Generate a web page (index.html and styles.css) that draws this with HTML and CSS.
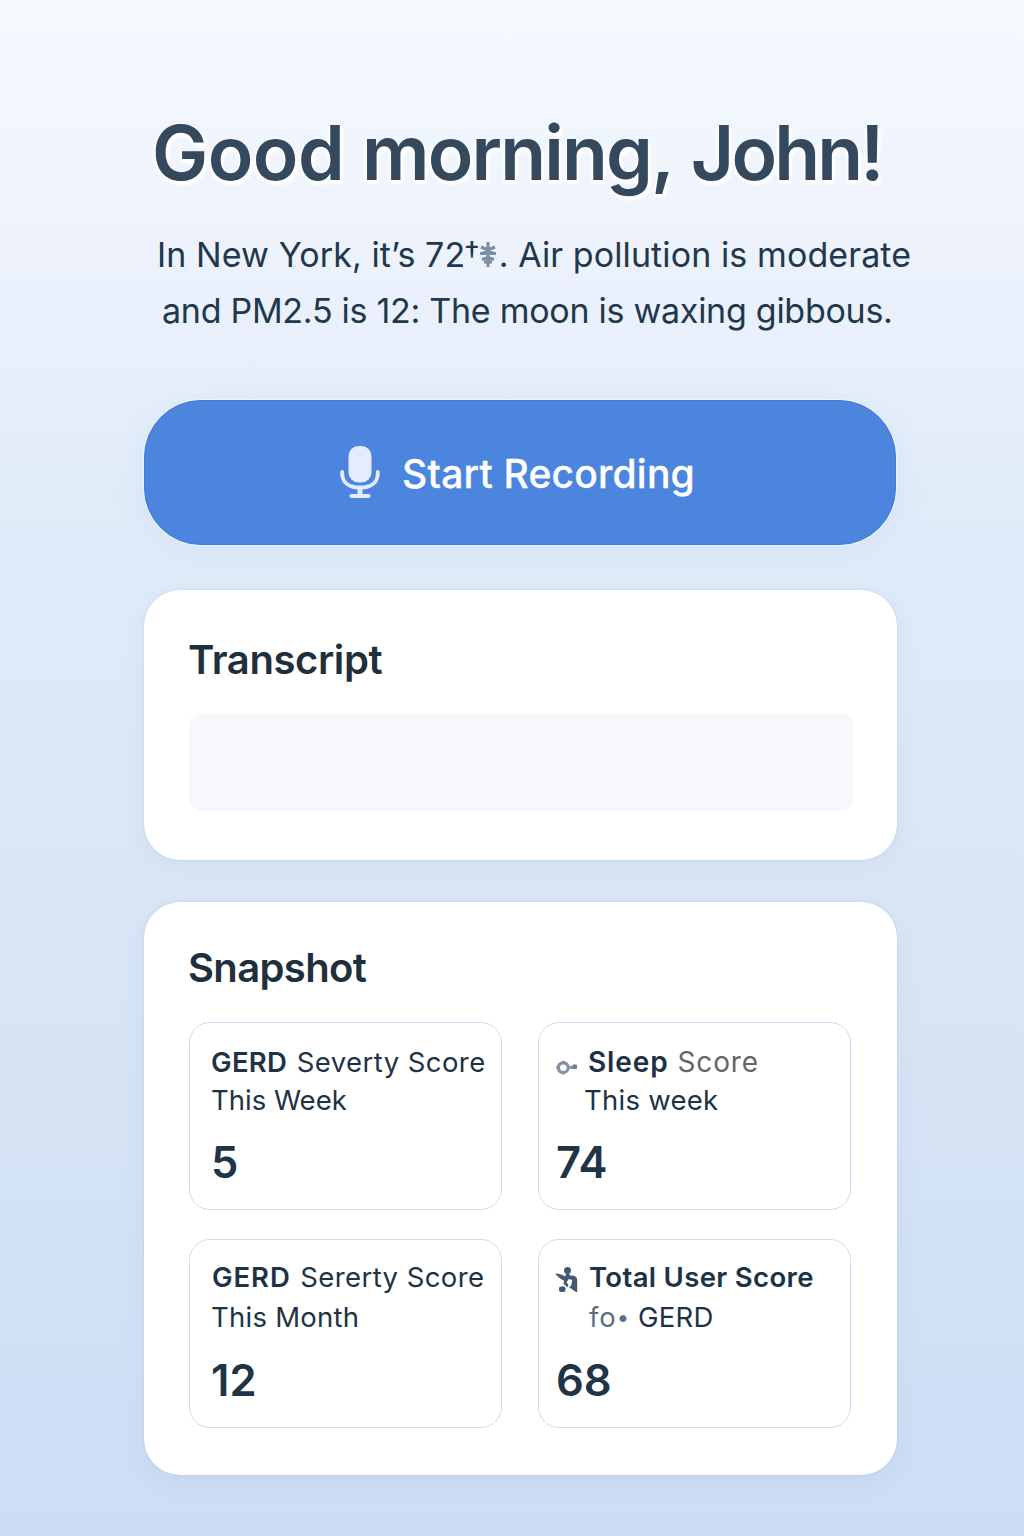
FILE: index.html
```html
<!DOCTYPE html>
<html lang="en">
<head>
<meta charset="utf-8">
<title>Good morning</title>
<link rel="stylesheet" href="styles.css">
</head>
<body>
<main class="page">
  <header class="intro">
    <h1 class="greeting"><span class="greet-good">Good</span> <span class="greet-morning">morning,</span> <span class="greet-name">John!</span></h1>
    <p class="weather"><span class="line line-one">In New York, it’s 72<span class="dagger">†</span><svg class="weather-mark" viewBox="0 0 16 26" aria-hidden="true"><path d="M8 0v25M1 5l7 3 7-3M0 11.500h16M2 12l6-4 6 4M2 17.500l6-2 6 2M4 20h8" fill="none" stroke="currentColor" stroke-width="3"/></svg>. Air pollution is moderate</span><span class="line line-two">and PM2.5 is 12: The moon is waxing gibbous.</span></p>
  </header>

  <button class="record" type="button">
    <svg class="mic" viewBox="0 0 40 54" aria-hidden="true">
      <rect x="8.500" y="1" width="23" height="36.500" rx="10" fill="#e4edfd"/>
      <path d="M2.200 27v1.500c0 8.500 6 14 17.800 14s17.800-5.500 17.800-14V27" fill="none" stroke="#e4edfd" stroke-width="3.800" stroke-linecap="round"/>
      <path d="M20 43v7" stroke="#e4edfd" stroke-width="5"/>
      <path d="M11.500 51h17" stroke="#e4edfd" stroke-width="4.200" stroke-linecap="round"/>
    </svg>
    <span class="record-label">Start Recording</span>
  </button>

  <section class="card transcript">
    <h2 class="card-title">Transcript</h2>
    <div class="transcript-box"></div>
  </section>

  <section class="card snapshot">
    <h2 class="card-title snapshot-title">Snapshot</h2>
    <div class="tiles">
      <article class="tile">
        <p class="label"><strong class="gerd">GERD</strong> <span class="metric">Severty Score</span></p>
        <p class="period">This Week</p>
        <p class="value">5</p>
      </article>
      <article class="tile tile-icon">
        <div class="label"><svg class="icon" viewBox="0 0 24 28" aria-hidden="true"><path d="M8.500 9.500 13 12 15.500 16.500 13 21 8.500 23.800 3.500 21.500 1 16.500 3.500 12z" fill="#8291a4"/><path d="M14 16.500h5" stroke="#8c9aab" stroke-width="3"/><rect x="17.500" y="13.500" width="4.500" height="4.500" rx="1" fill="#6b7c90"/><circle cx="8.300" cy="16.700" r="3.300" fill="#fff"/></svg><p class="sleep"><strong>Sleep</strong> <span class="muted">Score</span></p></div>
        <p class="period period-sleep">This week</p>
        <p class="value">74</p>
      </article>
      <article class="tile tile-low">
        <p class="label label-month"><strong class="gerd-month">GERD</strong> <span class="metric">Sererty Score</span></p>
        <p class="period">This Month</p>
        <p class="value">12</p>
      </article>
      <article class="tile tile-icon tile-low">
        <div class="label"><svg class="icon" viewBox="0 0 24 28" aria-hidden="true"><g fill="#435a70"><circle cx="12.500" cy="4.500" r="3.500"/><path d="M.2 7.500C5 7.500 8 9 10 10.500L11.500 7.500h2.500L15 9.500c4-.5 7 1 7.200 4V26.500L19.500 25l-5.500-4 2.200-1.500 1-5.500-3.400-1-2.300 3.500 2 2-1.200 3-3.800-4 .5-3C5 13 2.500 10.500.2 7.500z"/><rect x="4" y="20.500" width="6.500" height="5.500" rx="2"/></g></svg><p class="total"><strong>Total User Score</strong></p></div>
        <p class="period period-total"><span class="faded">fo<span class="dot">•</span></span> GERD</p>
        <p class="value">68</p>
      </article>
    </div>
  </section>
</main>
</body>
</html>
```

FILE: styles.css
```css
* { box-sizing: border-box; }

body {
  margin: 0;
  min-height: 1536px;
  font-family: Inter, "Liberation Sans", sans-serif;
  color: #1d3345;
  background: linear-gradient(180deg, #f6f9fe 0, #eef3fd 220px, #e8effb 370px, #e1ecf9 480px, #dbe8f7 760px, #d5e3f5 1130px, #cfdef5 1450px, #cdddf5 1536px);
}

h1, h2, p { margin: 0; }

.page {
  display: flex;
  flex-direction: column;
  width: 753px;
  margin-left: 144px;
  padding-top: 108px;
}

.intro { height: 292px; white-space: nowrap; }

.greeting {
  margin-left: 8px;
  font-size: 75px;
  line-height: 90px;
  font-weight: 600;
  letter-spacing: -1.2px;
  color: #34495d;
  text-shadow: 0 2px 3px #fff, 0 3px 3px #fff, 3px 4px 3px #fff, -2px 2px 3px #fff;
}
.greet-good { letter-spacing: -.5px; }
.greet-morning { letter-spacing: -1.850px; }
.greet-name { letter-spacing: -2.900px; }

.weather {
  margin-top: 29px;
  font-size: 34px;
  line-height: 56px;
  color: #1f384b;
}

.line { display: block; }
.line-one { margin-left: 13px; letter-spacing: .1px; }
.line-two { margin-left: 18px; letter-spacing: -.27px; }
.dagger { margin-left: -1px; font-size: 31px; vertical-align: 3px; line-height: 0; }
.weather-mark { width: 16px; height: 26px; margin: 0 3px 0 0; vertical-align: -1px; color: #7a8da3; }

.record {
  display: flex;
  align-items: center;
  justify-content: center;
  gap: 22px;
  width: 752px;
  height: 145px;
  padding: 0 5px 0 0;
  border: 1px solid #3d7bdc;
  border-radius: 57px;
  color: #fff;
  background: #4c85dd;
  font: 500 39px/48px Inter, "Liberation Sans", sans-serif;
  letter-spacing: .2px;
  -webkit-text-stroke: .3px #fff;
  box-shadow: 0 0 0 1px rgba(255, 255, 255, .5), 0 4px 32px rgba(100, 150, 215, .10);
}

.mic { width: 40px; height: 54px; margin-bottom: 2px; }
.record-label { padding-top: 2px; }

.card {
  background: #fff;
  border-radius: 36px;
  box-shadow: 0 0 2px rgba(135, 172, 225, .45), 0 6px 22px rgba(110, 145, 195, .10);
}

.transcript { height: 270px; margin-top: 45px; padding: 45px; }
.snapshot { height: 573px; margin-top: 42px; padding: 41px 45px 0; }

.card-title {
  height: 50px;
  margin-left: -1px;
  font-size: 40px;
  line-height: 50px;
  font-weight: 600;
  letter-spacing: -.4px;
  color: #1f303d;
}
.snapshot-title { letter-spacing: -.65px; }

.transcript-box {
  width: 664px;
  height: 98px;
  margin-top: 28px;
  border-radius: 12px;
  background: #f6f8fc;
}

.tiles {
  display: grid;
  grid-template-columns: 313px 313px;
  grid-template-rows: 188px 189px;
  gap: 29px 36px;
  margin-top: 29px;
}

.tile {
  padding: 20px 0 0 21px;
  border: 1px solid #ccdcf9;
  border-radius: 21px;
  white-space: nowrap;
}
.tile-icon { padding-left: 17px; }
.tile-low { padding-top: 18px; }

.label { display: flex; gap: 10px; height: 39px; font-size: 27.500px; line-height: 39px; }
.label strong { font-weight: 600; }
.gerd { letter-spacing: .3px; }
.gerd-month { letter-spacing: .9px; }
.label-month { padding-left: 1px; }
.metric { margin-left: -.5px; letter-spacing: .42px; }
.icon { width: 24px; height: 28px; margin: 8px 0 0 -1px; overflow: visible; }
.sleep { margin-left: -1px; font-size: 28px; letter-spacing: .9px; }
.total { letter-spacing: .35px; }
.muted { color: #666; }
.period { height: 38px; margin-top: -1px; font-size: 27.500px; line-height: 38px; }
.tile-low .period { height: 40px; margin-top: 0; padding-top: 1px; letter-spacing: .25px; }
.period-sleep { margin-left: 28px; letter-spacing: .25px; }
.period-total { margin-left: 33px; }
.faded { color: #5c6f82; letter-spacing: .9px; }
.dot { font-size: 22px; vertical-align: 2px; line-height: 0; }
.value { margin-top: 16px; font-size: 43.500px; line-height: 54px; font-weight: 600; color: #203446; }
```
